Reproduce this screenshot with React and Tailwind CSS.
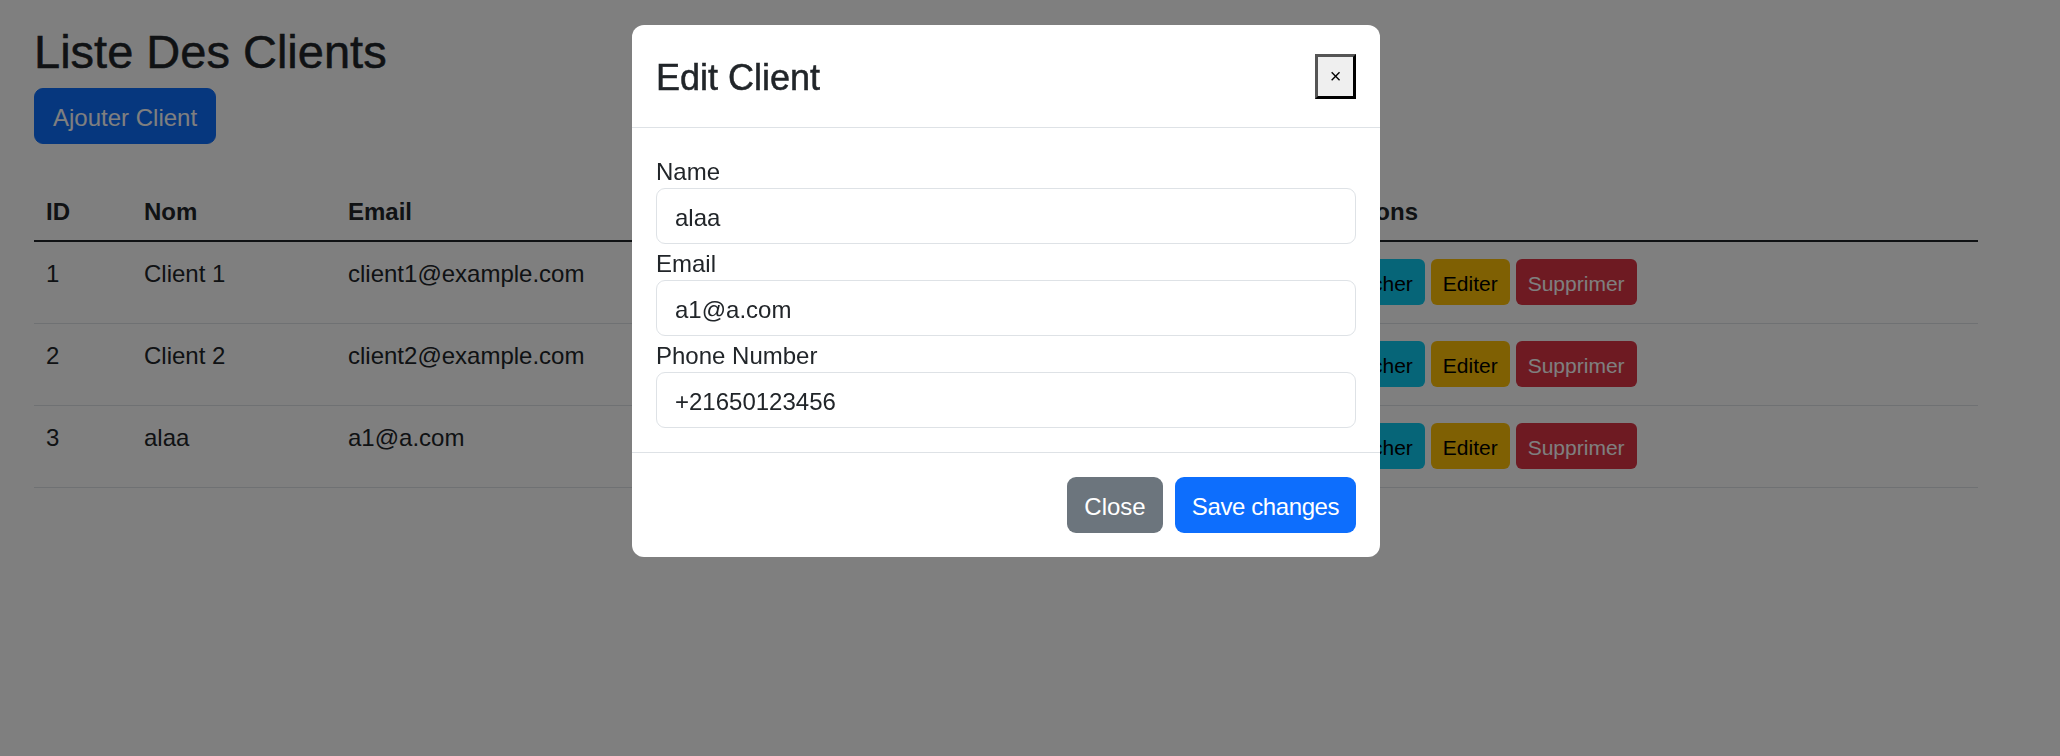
import React, { useState } from 'react';

const initialClients = [
    { id: 1, name: 'Client 1', email: 'client1@example.com', phone: '+21620000001' },
    { id: 2, name: 'Client 2', email: 'client2@example.com', phone: '+21620000002' },
    { id: 3, name: 'alaa', email: 'a1@a.com', phone: '+21650123456' },
];

const EditClientModal = ({ client, onClose }) => {
    const [form, setForm] = useState({ name: client.name, email: client.email, phone: client.phone });

    const fields = [
        { key: 'name', label: 'Name' },
        { key: 'email', label: 'Email' },
        { key: 'phone', label: 'Phone Number' },
    ];

    return (
        <div className="fixed inset-0 bg-black/50">
            <div className="ml-[632px] mt-[25px] w-[748px] bg-white rounded-[12px] text-[#212529]">
                <div className="flex items-center justify-between px-[24px] py-[24px] border-b border-[#dee2e6]">
                    <h4 className="text-[36px] pt-[3px] leading-[51px] font-medium [-webkit-text-stroke:0.5px]">Edit Client</h4>
                    <button
                        onClick={onClose}
                        className="w-[41px] h-[45px] flex items-center justify-center bg-[#efefef] border-[3px] border-t-[#555] border-l-[#555] border-r-black border-b-black text-[20px] leading-none text-black"
                    >
                        ×
                    </button>
                </div>
                <div className="p-[24px]">
                    {fields.map(f => (
                        <div key={f.key}>
                            <label className="block text-[24px] pt-[3px] leading-[33px]">{f.label}</label>
                            <input
                                value={form[f.key]}
                                onChange={e => setForm({ ...form, [f.key]: e.target.value })}
                                className="block w-full h-[56px] px-[18px] pt-[4px] border border-[#dee2e6] rounded-[9px] text-[24px] text-[#212529] outline-none"
                            />
                        </div>
                    ))}
                </div>
                <div className="flex justify-end gap-[12px] px-[24px] pt-[24px] pb-[24px] border-t border-[#dee2e6]">
                    <button onClick={onClose} className="h-[56px] w-[96px] pt-[3px] rounded-[9px] bg-[#6c757d] text-white text-[24px]">
                        Close
                    </button>
                    <button className="h-[56px] w-[181px] pt-[3px] rounded-[9px] bg-[#0d6efd] text-white text-[24px] tracking-[-0.4px]">
                        Save changes
                    </button>
                </div>
            </div>
        </div>
    );
};

const App = () => {
    const [clients] = useState(initialClients);
    const [editing, setEditing] = useState(initialClients[2]);

    return (
        <div className="min-h-screen bg-white text-[#212529] font-['Liberation_Sans',Arial,sans-serif]">
            <div className="px-[34px] pt-[22px]">
                <h2 className="text-[47px] pt-[3px] leading-[54px] font-medium mb-[9px] [-webkit-text-stroke:0.5px]">Liste Des Clients</h2>
                <button className="h-[56px] px-[18px] pt-[3px] rounded-[9px] bg-[#0d6efd] text-white text-[24px] border border-[#0d6efd]">
                    Ajouter Client
                </button>

                <table className="mt-[36px] w-[1944px] table-fixed border-collapse text-[24px] leading-[36px]">
                    <colgroup>
                        <col className="w-[98px]" />
                        <col className="w-[204px]" />
                        <col className="w-[470px]" />
                        <col className="w-[512px]" />
                        <col className="w-[660px]" />
                    </colgroup>
                    <thead>
                        <tr className="border-b-2 border-[#212529] text-left">
                            <th className="px-[12px] pt-[14px] pb-[10px] font-bold">ID</th>
                            <th className="px-[12px] pt-[14px] pb-[10px] font-bold">Nom</th>
                            <th className="px-[12px] pt-[14px] pb-[10px] font-bold">Email</th>
                            <th className="px-[12px] pt-[14px] pb-[10px] font-bold">Phone Number</th>
                            <th className="px-[12px] pt-[14px] pb-[10px] font-bold">Actions</th>
                        </tr>
                    </thead>
                    <tbody>
                        {clients.map(c => (
                            <tr key={c.id} className="border-b border-[#dee2e6] align-top">
                                <td className="px-[12px] pt-[14px] pb-[10px]">{c.id}</td>
                                <td className="px-[12px] pt-[14px] pb-[10px]">{c.name}</td>
                                <td className="px-[12px] pt-[14px] pb-[10px]">{c.email}</td>
                                <td className="px-[12px] pt-[14px] pb-[10px]">{c.phone}</td>
                                <td className="px-[12px] pt-[17px] pb-[18px]">
                                    <div className="flex gap-[6px] text-[21px] leading-[31px]">
                                        <button className="h-[46px] px-[12px] pt-[2px] rounded-[6px] bg-[#0dcaf0] text-black">Afficher</button>
                                        <button onClick={() => setEditing(c)} className="h-[46px] px-[12px] pt-[2px] rounded-[6px] bg-[#ffc107] text-black">Editer</button>
                                        <button className="h-[46px] px-[12px] pt-[2px] rounded-[6px] bg-[#dc3545] text-white">Supprimer</button>
                                    </div>
                                </td>
                            </tr>
                        ))}
                    </tbody>
                </table>
            </div>

            {editing && <EditClientModal client={editing} onClose={() => setEditing(null)} />}
        </div>
    );
};

export default App;
